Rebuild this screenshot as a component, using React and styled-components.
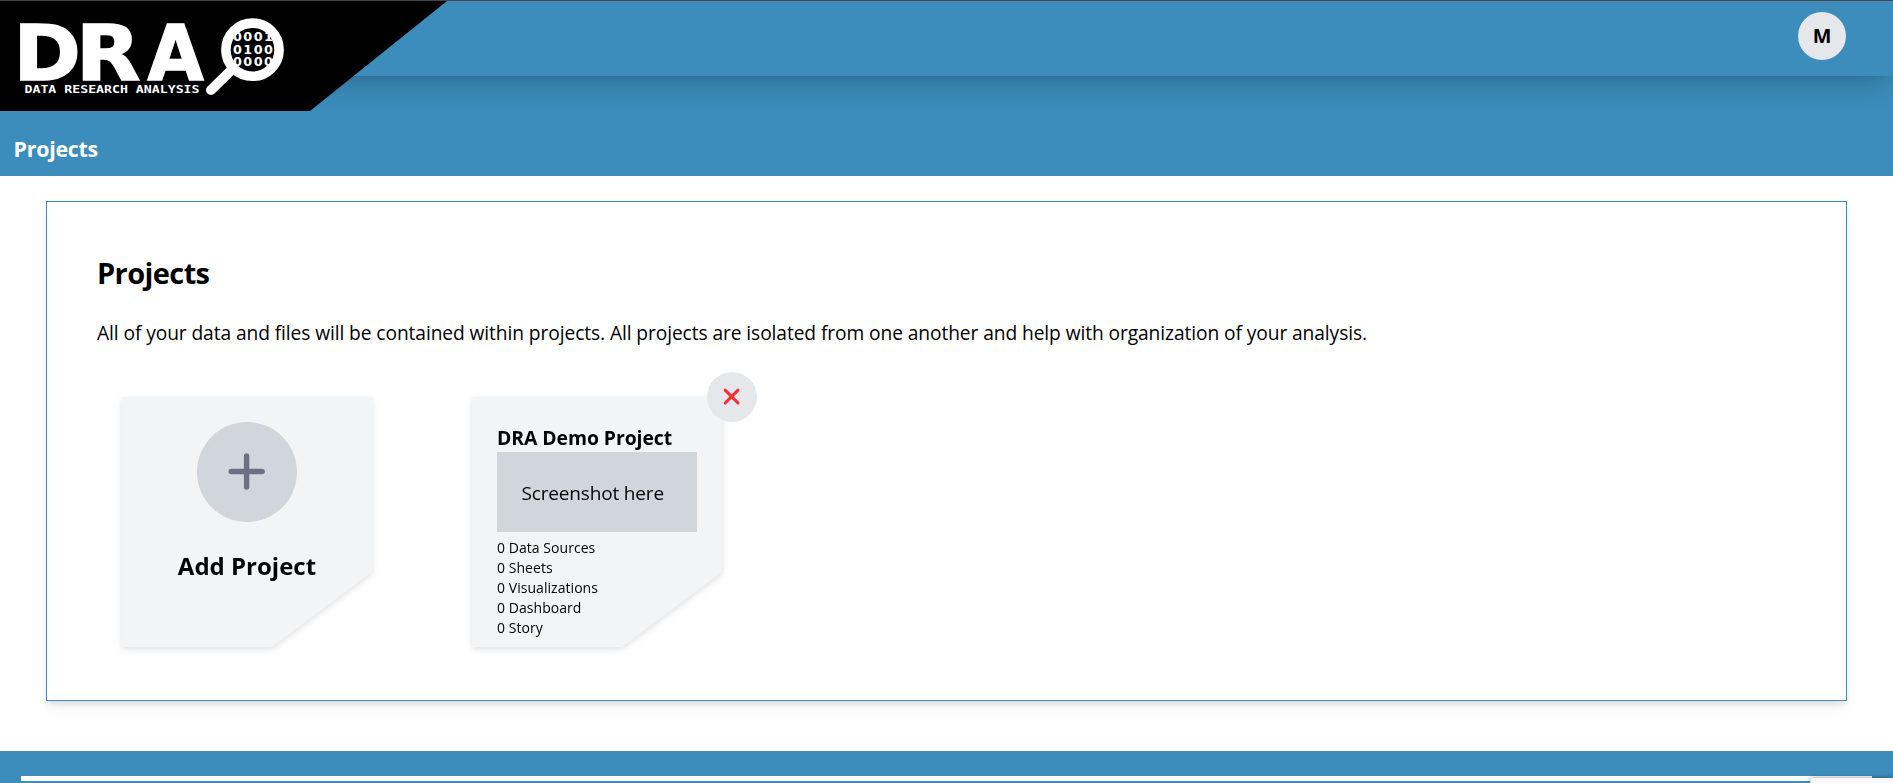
import React from "react";
import styled, { createGlobalStyle } from "styled-components";

const blue = "#3c8dbc";

const Global = createGlobalStyle`
  * { box-sizing: border-box; }
  html, body { margin: 0; height: 100%; overflow: hidden; background: #fff; }
  body { font-family: "Open Sans", "Noto Sans", sans-serif; color: #000; }
  h1, h2, h3, p, ul { margin: 0; padding: 0; }
  #root { height: 100%; }
`;

const Page = styled.div`
  position: relative;
  display: flex;
  flex-direction: column;
  height: 783px;
  border-top: 1px solid #444;
  overflow: hidden;
`;

const Header = styled.header`
  position: relative;
  z-index: 1;
  display: flex;
  justify-content: space-between;
  align-items: flex-start;
  flex: none;
  height: 75px;
  background: ${blue};
  box-shadow: 0 20px 25px -5px rgba(0, 0, 0, 0.12), 0 8px 10px -6px rgba(0, 0, 0, 0.1);
`;

const Brand = styled.div`
  width: 447px;
  height: 110px;
  background: #000;
  clip-path: polygon(0 0, 100% 0, 310px 100%, 0 100%);
`;

const LogoArt = styled.svg`
  display: block;
  fill: #fff;
  font-family: "DejaVu Sans", sans-serif;
  font-weight: 700;
`;

const Avatar = styled.button`
  display: flex;
  align-items: center;
  justify-content: center;
  width: 48px;
  height: 48px;
  margin: 11px 47px 0 0;
  padding: 0;
  border: 0;
  border-radius: 50%;
  background: #e5e7eb;
  color: #000;
  font: 700 19.8px/48px "Open Sans", sans-serif;
`;

const TitleBar = styled.div`
  flex: none;
  height: 100px;
  padding: 57.5px 0 0 13.5px;
  background: ${blue};
`;

const PageTitle = styled.h1`
  color: #fff;
  font-size: 21.4px;
  line-height: 30px;
  letter-spacing: -0.25px;
`;

const Main = styled.main`
  flex: none;
  height: 575px;
  padding: 25px 46px 0;
`;

const Panel = styled.section`
  height: 500px;
  padding: 49px 50px 50px;
  border: 1px solid ${blue};
  background: #fff;
  box-shadow: 0 4px 6px -1px rgba(0, 0, 0, 0.1), 0 10px 15px -3px rgba(0, 0, 0, 0.05);
`;

const Heading = styled.h2`
  font-size: 29px;
  line-height: 44px;
  letter-spacing: -0.6px;
`;

const Intro = styled.p`
  margin-top: 23px;
  font-size: 19.2px;
  line-height: 30px;
  letter-spacing: -0.09px;
`;

const Cards = styled.div`
  display: flex;
  gap: 100px;
  margin: 49px 0 0 25px;
`;

const CardSlot = styled.div`
  position: relative;
  width: 250px;
  height: 250px;
`;

const CardShadow = styled.div`
  filter: drop-shadow(0 2px 3px rgba(0, 0, 0, 0.13));
`;

const Card = styled.div`
  display: flex;
  flex-direction: column;
  align-items: ${(p) => (p.$centered ? "center" : "stretch")};
  width: 250px;
  height: 250px;
  padding: 25px;
  background: #f3f4f6;
  clip-path: polygon(0 0, 100% 0, 100% 70%, 60% 100%, 0 100%);
`;

const AddCircle = styled.div`
  display: flex;
  align-items: center;
  justify-content: center;
  width: 100px;
  height: 100px;
  border-radius: 50%;
  background: #d1d5dc;
`;

const AddLabel = styled.h3`
  margin-top: 26px;
  font-size: 24px;
  line-height: 36px;
  white-space: nowrap;
`;

const ProjectName = styled.h3`
  height: 30px;
  padding-top: 1px;
  font-size: 19.4px;
  line-height: 30px;
  letter-spacing: -0.07px;
  white-space: nowrap;
`;

const Preview = styled.div`
  flex: none;
  height: 80px;
  padding: 26px 0 0 24.5px;
  background: #d1d5dc;
  font-size: 19px;
  line-height: 30px;
  letter-spacing: -0.16px;
`;

const Stats = styled.ul`
  margin-top: 6px;
  list-style: none;
  font-size: 14px;
  line-height: 20px;
  letter-spacing: 0.05px;
`;

const DeleteButton = styled.button`
  position: absolute;
  top: -25px;
  right: -35px;
  display: flex;
  align-items: center;
  justify-content: center;
  width: 50px;
  height: 50px;
  padding: 0;
  border: 0;
  border-radius: 50%;
  background: #e5e7eb;
`;

const Footer = styled.footer`
  flex: none;
  height: 32px;
  padding: 25px 21px 0;
  background: ${blue};
`;

const FooterRule = styled.div`
  height: 5px;
  background: #fff;
`;

const CornerPopup = styled.div`
  position: absolute;
  right: 0;
  bottom: 0;
  width: 83px;
  height: 5px;
  border-top-left-radius: 4px;
  background: #f9f9f9;
  box-shadow: 0 0 5px rgba(0, 0, 0, 0.45);
`;

function Logo() {
  return (
    <LogoArt width="447" height="110" viewBox="0 1 447 110">
      <g fontSize="76" stroke="#fff" strokeWidth="1.6">
        <text transform="translate(13.4 80.2) scale(1.067 1)">D</text>
        <text transform="translate(76 80.2) scale(1.1 1)">R</text>
        <text transform="translate(147.4 80.2) scale(0.955 1)">A</text>
      </g>
      <text
        x="24.5"
        y="93.3"
        fontSize="9.8"
        fontFamily="DejaVu Sans Mono, monospace"
        textLength="175"
        lengthAdjust="spacingAndGlyphs"
      >
        DATA RESEARCH ANALYSIS
      </text>
      <clipPath id="lens">
        <circle cx="252.5" cy="49.5" r="22.5" />
      </clipPath>
      <g clipPath="url(#lens)" fontSize="12.8">
        <text x="233" y="41.3" textLength="40">0001</text>
        <text x="233" y="53.7" textLength="40">0100</text>
        <text x="233" y="66" textLength="40">0000</text>
      </g>
      <circle cx="252.5" cy="49.7" r="26.6" fill="none" stroke="#fff" strokeWidth="9.6" />
      <path d="M211 90 L233 68.5" stroke="#fff" strokeWidth="10" strokeLinecap="round" />
    </LogoArt>
  );
}

const stats = ["0 Data Sources", "0 Sheets", "0 Visualizations", "0 Dashboard", "0 Story"];

export default function App() {
  return (
    <Page>
      <Global />
      <Header>
        <Brand>
          <Logo />
        </Brand>
        <Avatar>M</Avatar>
      </Header>
      <TitleBar>
        <PageTitle>Projects</PageTitle>
      </TitleBar>
      <Main>
        <Panel>
          <Heading>Projects</Heading>
          <Intro>
            All of your data and files will be contained within projects. All projects are isolated
            from one another and help with organization of your analysis.
          </Intro>
          <Cards>
            <CardSlot>
              <CardShadow>
                <Card $centered>
                  <AddCircle>
                    <svg width="38" height="38" viewBox="0 0 38 38" stroke="#6a7282" strokeWidth="5.4" strokeLinecap="round">
                      <path d="M18.6 3v31M3.2 18.5h31" />
                    </svg>
                  </AddCircle>
                  <AddLabel>Add Project</AddLabel>
                </Card>
              </CardShadow>
            </CardSlot>
            <CardSlot>
              <CardShadow>
                <Card>
                  <ProjectName>DRA Demo Project</ProjectName>
                  <Preview>Screenshot here</Preview>
                  <Stats>
                    {stats.map((s) => (
                      <li key={s}>{s}</li>
                    ))}
                  </Stats>
                </Card>
              </CardShadow>
              <DeleteButton aria-label="Delete project">
                <svg width="18" height="18" viewBox="0 0 18 18" stroke="#fb2c36" strokeWidth="3.1" strokeLinecap="round">
                  <path d="M2.2 2.2l12.8 12.8M15 2.2L2.2 15" />
                </svg>
              </DeleteButton>
            </CardSlot>
          </Cards>
        </Panel>
      </Main>
      <Footer>
        <FooterRule />
      </Footer>
      <CornerPopup />
    </Page>
  );
}
